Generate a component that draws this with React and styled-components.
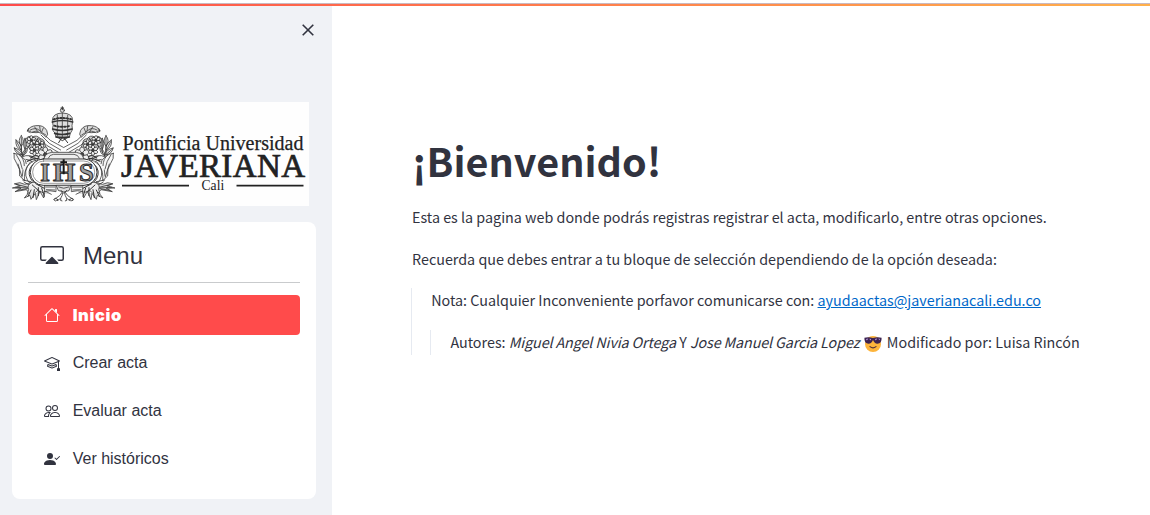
import React from "react";
import styled, { createGlobalStyle } from "styled-components";
import { BsCast, BsMortarboard, BsPeople, BsPersonCheckFill } from "react-icons/bs";

const Global = createGlobalStyle`
  * { box-sizing: border-box; }
  body { margin: 0; background: #fff; overflow: hidden; }
`;

const Shell = styled.div`
  height: 515px;
  padding-top: 3px;
  display: flex;
  flex-direction: column;
  color: #31333f;
  font-family: "Noto Sans CJK SC", "Noto Sans", sans-serif;
  background: #fff;
`;
const Accent = styled.div`
  flex: none;
  height: 3px;
  border-top: 1px solid #c9b9c0;
  background: linear-gradient(90deg, #ff4b4b, #ffb04b);
`;
const Body = styled.div`
  flex: 1;
  display: flex;
  min-height: 0;
`;

const Side = styled.aside`
  flex: none;
  width: 332px;
  padding: 17px 16px 0 12px;
  display: flex;
  flex-direction: column;
  background: #f0f2f6;
`;
const CloseButton = styled.button`
  align-self: flex-end;
  width: 14px;
  height: 14px;
  margin: 0 1px 65px 0;
  padding: 0;
  border: 0;
  background: none;
  color: #31333f;
  svg { display: block; }
`;
const LogoArt = styled.svg`
  flex: none;
  display: block;
  margin-bottom: 16px;
  background: #fefefe;
  font-family: "Liberation Serif", serif;
`;
const MenuCard = styled.nav`
  height: 277px;
  padding: 16px;
  border-radius: 8px;
  background: #fff;
  font-family: "Liberation Sans", sans-serif;
`;
const MenuHead = styled.div`
  height: 45px;
  display: flex;
  align-items: center;
  gap: 19px;
  padding: 0 12px 10px;
  border-bottom: 1px solid #c9cbcd;
  font-size: 24px;
  line-height: 36px;
  svg { flex: none; }
  span { padding-top: 2px; }
`;
const MenuList = styled.ul`
  list-style: none;
  margin: 12px 0 0;
  padding: 0;
  display: flex;
  flex-direction: column;
  gap: 8px;
`;
const MenuItem = styled.li`
  height: 40px;
  padding: 0 16px;
  display: flex;
  align-items: center;
  gap: 12.7px;
  border-radius: 4px;
  font-size: 16px;
  background: ${(p) => (p.$active ? "#ff4b4b" : "transparent")};
  color: ${(p) => (p.$active ? "#fff" : "#31333f")};
  span {
    font-family: ${(p) => (p.$active ? '"Inter", sans-serif' : "inherit")};
    font-weight: ${(p) => (p.$active ? 900 : 400)};
    font-size: ${(p) => (p.$active ? "16.5px" : "16px")};
    letter-spacing: ${(p) => (p.$active ? "0.6px" : "0")};
  }
`;

const Main = styled.main`
  padding: 124px 0 0 80px;
  white-space: nowrap;
`;
const Title = styled.h1`
  margin: 0 0 15px;
  font-size: 39.5px;
  line-height: 60px;
  font-weight: 700;
`;
const Text = styled.p`
  margin: 0 0 16px;
  padding-bottom: 2.4px;
  font-size: 14.34px;
  line-height: 23.2px;
`;
const Quote = styled.blockquote`
  margin: 0 0 0 -1px;
  padding-left: 19.2px;
  border-left: 1px solid #e6eaf1;
  > p:last-child { margin: 0; }
`;
const Name = styled.em`
  letter-spacing: -0.12px;
`;
const Link = styled.a`
  color: #0068c9;
  text-decoration: underline;
`;
const Emoji = styled.svg`
  margin: -2px 2px -2px 1px;
  vertical-align: -3px;
`;

const HouseIcon = () => (
  <svg width="16" height="16" viewBox="0 0 16 16" fill="currentColor">
    <path fillRule="evenodd" d="M2 13.5V7h1v6.5a.5.5 0 0 0 .5.5h9a.5.5 0 0 0 .5-.5V7h1v6.5a1.5 1.5 0 0 1-1.5 1.5h-9A1.5 1.5 0 0 1 2 13.5zm11-11V6l-2-2V2.5a.5.5 0 0 1 .5-.5h1a.5.5 0 0 1 .5.5z" />
    <path fillRule="evenodd" d="M7.293 1.5a1 1 0 0 1 1.414 0l6.647 6.646a.5.5 0 0 1-.708.708L8 2.207 1.354 8.854a.5.5 0 1 1-.708-.708L7.293 1.5z" />
  </svg>
);

const Sunglasses = () => (
  <Emoji width="18" height="18" viewBox="0 0 18 18" role="img" aria-label="😎">
    <circle cx="9" cy="9" r="8" fill="#fdb43b" />
    <path d="M.4 2.7q4.6-1 8.6.4 4-1.400 8.600-.4.3 5.900-4.200 6-3 0-4.400-3.700Q7.600 8.700 4.600 8.700.1 8.600.4 2.700z" fill="#3c2350" />
    <path d="M2 4l2.300-.4-1.400 2zM5.500 3.700l1.700.4-1 1.400zM11 4l2.200-.4-1.400 2zM14.500 3.600l1.500.3-.8 1.300z" fill="#c8a3ef" />
    <path d="M6 11.600q3 2.400 6 0" fill="none" stroke="#51303b" strokeWidth="1.200" strokeLinecap="round" />
  </Emoji>
);

const Flower = ({ x, y, r = 11 }) => (
  <g transform={`translate(${x} ${y})`}>
    {[0, 60, 120, 180, 240, 300].map((a) => (
      <ellipse key={a} cx="0" cy={-r * 0.72} rx={r * 0.42} ry={r * 0.55} transform={`rotate(${a})`} fill="#eee" />
    ))}
    <circle r={r * 0.32} fill="#444" />
  </g>
);

/* One flank of the coat of arms; the other one is its mirror image. */
const Flank = () => (
  <g>
    <path d="M182 180L148 160 123 135M177 188L140 166 116 142M190 172L151 151 133 134" />
    <path d="M83 121q7-13 25-14 22-3 32 14 7 13-2 21-14-18-30-14-13 2-25-7z" fill="#ddd" />
    <path d="M91 120q16-9 27 1t19 14M96 127q14-7 20-1M104 111l8 12M119 109l2 14M130 114l-5 12M86 115l-4 9 9 4" />
    <path d="M75 150q9-16 22-9 15-7 23 5 15 1 13 16 10 9-1 20-15 8-25 0-17 4-20-9-16-7-12-23z" fill="#ccc" />
    <path d="M80 158q13-12 21 0t22-4M86 170q8-15 18-5t26-1M92 147l7 16 15-17M104 176l7-20 14 16" strokeWidth="3.500" />
    <Flower x={94} y={151} r={11} />
    <Flower x={119} y={163} r={11} />
    <Flower x={103} y={181} r={12} />
    <Flower x={136} y={194} r={18} />
    <path d="M64 137q-13 15 0 32 12-15 0-32zM48 150q-4 22 17 31 1-20-17-31zM43 174q1 18 26 22-7-19-26-22zM75 145q-9 16 0 33 8-14 0-33zM82 174q-15 7-14 23 16-7 14-23z" fill="#eee" />
    <path d="M64 143v51M50 155l18 35M45 177l23 20M75 151v38M79 180l-13 21" />
    <path d="M42 190q-3 16 8 30 12 16 9 38l15 14q-3-27 10-46 13-16 31-17-27-20-49-8-10-11-24-11z" fill="#f6f6f6" />
    <path d="M49 194q14 19 18 43M58 193q15 14 15 34M68 202q11 7 11 19M78 208q12 0 19 8M88 199q15 2 18 12M54 222l12 39M69 240l-2 18" />
    <path d="M92 204q13-12 25-4M82 214q18-10 33-9" strokeWidth="3.500" />
    <path d="M98 224q-18 18-6 42 10 18 34 18" strokeWidth="3" />
    <path d="M91 216q-24 27-8 56 13 19 46 19" />
    <path d="M44 281q17-7 30 2l20-5 13 17-20 14-8-10-34 6 18-10-26-1 23-6z" fill="#ddd" />
    <path d="M49 283l36 9M47 292l37 2M53 301l29-5M72 276l17 10M68 270l25 5" strokeWidth="2.500" />
    <path d="M94 278q17-5 22 8l9-3q16 1 20 13l-16 12-16-7-14 13-17-3 4-13q-6-12 8-20z" fill="#eee" />
    <path d="M87 307l-14 17 17-8 3 12 13-18 3 19 11-25 11 20 4-21 19 10" fill="#ddd" />
    <path d="M93 300l-9 19M103 299l-4 24M115 293l0 24M125 294l8 25M97 285l22 20M107 281l26 14" strokeWidth="3" />
    <path d="M135 284q18-1 33 2v19q-19-5-33-1zM137 291h28M139 299l25 1" fill="#f4f4f4" />
    <path d="M190 302q-8 16-26 26m24-18q-2 16-16 22m1-3q-7-9-12 0 4 8 12 0m9-3q-3 8 4 7" strokeWidth="2.500" />
  </g>
);

const Crest = () => (
  <g transform="scale(.33333) translate(-36 -36)" fill="none" stroke="#343434" strokeWidth="2.300" strokeLinejoin="round" strokeLinecap="round">
    <Flank />
    <g transform="translate(382 0) scale(-1 1)"><Flank /></g>
    <path d="M132 213q-2-22 23-26h74q24 4 22 26zM145 204q4-10 15-11h62q12 1 16 11" fill="#eee" />
    <rect x="91" y="207" width="200" height="79" rx="39" fill="#fff" strokeWidth="3" />
    <rect x="98" y="213" width="186" height="67" rx="33" strokeWidth="1.500" />
    <path d="M170 286h43l-6 16q-15 8-31 0z" fill="#ddd" />
    <path d="M176 291q15 8 31 0M183 301l8 9 9-9" />
    <path d="M157 91q0-21 30-22 32 1 31 24l-2 14q5 13-5 23l-3 11h-40l-3-12q-11-8-6-21z" fill="#ddd" />
    <path d="M157 96q30-9 61 0M158 117q29 9 58 0M164 130q22 7 45 0M168 141q20 5 40 0" strokeWidth="5" />
    <path d="M161 88q25-8 52 0M163 107q23 7 49 0" strokeDasharray="4 6" strokeWidth="6" />
    <path d="M172 75v63M187 70v71M203 76v62" />
    <circle cx="187" cy="61" r="6" fill="#ddd" />
    <path d="M187 50v9M183 54h8" strokeWidth="3" />
    <path d="M177 145l10 7 12-7M184 145l-8 13M193 145l10 13" strokeWidth="3" />
    <g fill="#a2a2a2" stroke="#2b2b2b" strokeWidth="3" fontFamily="Liberation Serif" fontWeight="700" fontSize="73">
      <text x="121" y="272" textLength="29" lengthAdjust="spacingAndGlyphs">I</text>
      <text x="159" y="272" textLength="67" lengthAdjust="spacingAndGlyphs">H</text>
      <text x="237" y="272" textLength="44" lengthAdjust="spacingAndGlyphs">S</text>
    </g>
    <path d="M191 208v45M181 217h20" stroke="#171717" strokeWidth="6" strokeLinecap="butt" />
  </g>
);

const Logo = () => (
  <LogoArt width="297" height="104" viewBox="0 0 297 104">
    <Crest />
    <g fill="#222">
      <text x="110.500" y="47.500" fontSize="20" textLength="181" stroke="#222" strokeWidth=".25">Pontificia Universidad</text>
      <text x="109" y="75" fontSize="33" textLength="184" stroke="#222" strokeWidth=".7">JAVERIANA</text>
      <text x="189.500" y="88" fontSize="13.600" textLength="22.700">Cali</text>
      <path d="M110 82.700h67v1.900h-67zM224.500 82.700h67v1.900h-67z" />
    </g>
  </LogoArt>
);

const items = [
  { label: "Inicio", Icon: HouseIcon, active: true },
  { label: "Crear acta", Icon: BsMortarboard },
  { label: "Evaluar acta", Icon: BsPeople },
  { label: "Ver históricos", Icon: BsPersonCheckFill },
];

export default function App() {
  return (
    <Shell>
      <Global />
      <Accent />
      <Body>
        <Side>
          <CloseButton aria-label="Cerrar">
            <svg width="14" height="14" viewBox="0 0 14 14" fill="none" stroke="currentColor" strokeWidth="1.600">
              <path d="M1.700 1.700l10.600 10.600M12.300 1.700L1.700 12.300" />
            </svg>
          </CloseButton>
          <Logo />
          <MenuCard>
            <MenuHead><BsCast size={24} /><span>Menu</span></MenuHead>
            <MenuList>
              {items.map(({ label, Icon, active }) => (
                <MenuItem key={label} $active={active}><Icon /><span>{label}</span></MenuItem>
              ))}
            </MenuList>
          </MenuCard>
        </Side>
        <Main>
          <Title>¡Bienvenido!</Title>
          <Text>Esta es la pagina web donde podrás registras registrar el acta, modificarlo, entre otras opciones.</Text>
          <Text>Recuerda que debes entrar a tu bloque de selección dependiendo de la opción deseada:</Text>
          <Quote>
            <Text>Nota: Cualquier Inconveniente porfavor comunicarse con: <Link>ayudaactas@javerianacali.edu.co</Link></Text>
            <Quote>
              <Text>Autores: <Name>Miguel Angel Nivia Ortega</Name> Y <Name>Jose Manuel Garcia Lopez</Name> <Sunglasses /> Modificado por: Luisa Rincón</Text>
            </Quote>
          </Quote>
        </Main>
      </Body>
    </Shell>
  );
}
